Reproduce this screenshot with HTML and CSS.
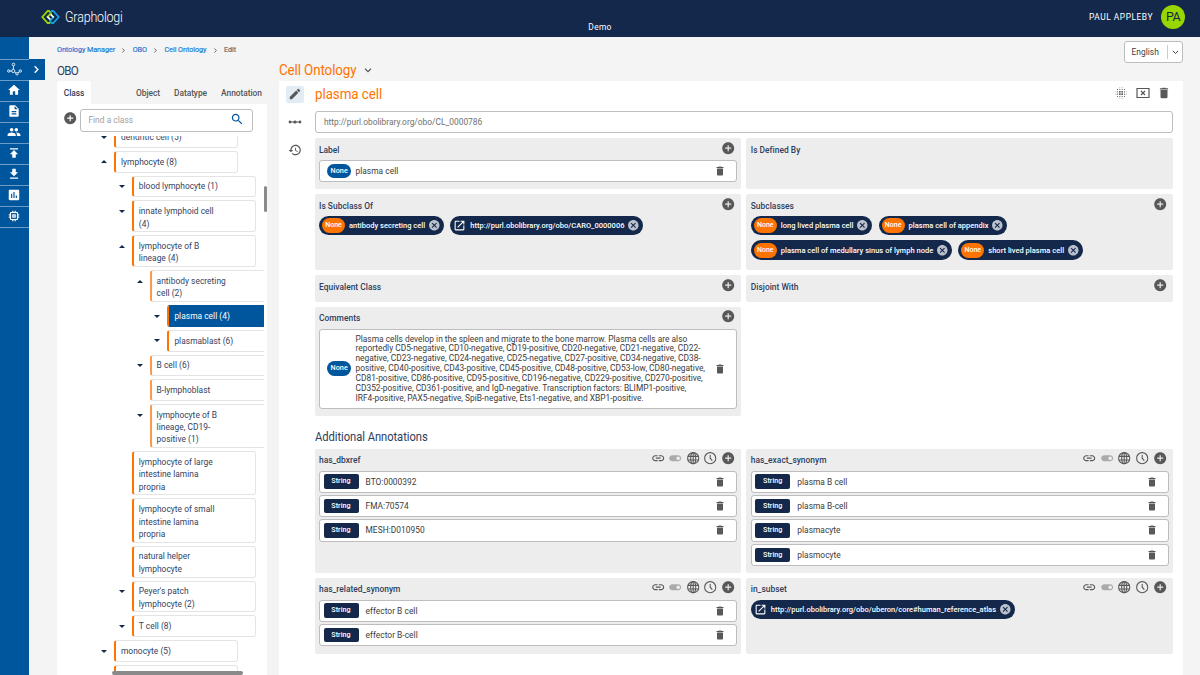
FILE: index.html
```html
<!DOCTYPE html>
<html lang="en">
<head>
    <meta charset="UTF-8">
    <meta name="viewport" content="width=device-width, initial-scale=1.0">
    <title>Graphologi</title>
    <link rel="stylesheet" href="styles.css">
</head>
<body>

    <!-- Icon set -->
    <svg class="sprite">
        <symbol id="i-add" viewBox="0 0 24 24"><path d="M12 2C6.48 2 2 6.48 2 12s4.480 10 10 10 10-4.480 10-10S17.520 2 12 2zm5 11h-4v4h-2v-4H7v-2h4V7h2v4h4v2z"/></symbol>
        <symbol id="i-trash" viewBox="0 0 24 24"><path d="M6 19c0 1.100.9 2 2 2h8c1.100 0 2-.9 2-2V7H6v12zM19 4h-3.500l-1-1h-5l-1 1H5v2h14V4z"/></symbol>
        <symbol id="i-cancel" viewBox="0 0 24 24"><path d="M12 2C6.470 2 2 6.470 2 12s4.470 10 10 10 10-4.470 10-10S17.530 2 12 2zm5 13.590L15.590 17 12 13.410 8.410 17 7 15.590 10.590 12 7 8.410 8.410 7 12 10.590 15.590 7 17 8.410 13.410 12 17 15.590z"/></symbol>
        <symbol id="i-open" viewBox="0 0 24 24"><path d="M19 19H5V5h7V3H5c-1.110 0-2 .9-2 2v14c0 1.100.89 2 2 2h14c1.100 0 2-.9 2-2v-7h-2v7zM14 3v2h3.590l-9.830 9.830 1.410 1.410L19 6.410V10h2V3h-7z"/></symbol>
        <symbol id="i-link" viewBox="0 0 24 24"><path d="M3.900 12c0-1.710 1.390-3.100 3.100-3.100h4V7H7c-2.760 0-5 2.240-5 5s2.240 5 5 5h4v-1.900H7c-1.710 0-3.100-1.390-3.100-3.100zM8 13h8v-2H8v2zm9-6h-4v1.900h4c1.710 0 3.100 1.390 3.100 3.100s-1.390 3.100-3.100 3.100h-4V17h4c2.760 0 5-2.240 5-5s-2.240-5-5-5z"/></symbol>
        <symbol id="i-toggle" viewBox="0 0 24 24"><path d="M17 7H7c-2.760 0-5 2.240-5 5s2.240 5 5 5h10c2.760 0 5-2.240 5-5s-2.240-5-5-5zm0 8c-1.660 0-3-1.340-3-3s1.340-3 3-3 3 1.340 3 3-1.340 3-3 3z"/></symbol>
        <symbol id="i-globe" viewBox="0 0 24 24"><g fill="none" stroke="currentColor" stroke-width="1.800"><circle cx="12" cy="12" r="9.300"/><ellipse cx="12" cy="12" rx="4.200" ry="9.300"/><path d="M3.200 9h17.600M3.200 15h17.600M12 2.500v19"/></g></symbol>
        <symbol id="i-clock" viewBox="0 0 24 24"><g fill="none" stroke="currentColor" stroke-width="1.800"><circle cx="12" cy="12" r="9.300"/><path d="M12 6.500V12l3.500 4"/></g></symbol>
        <symbol id="i-home" viewBox="0 0 24 24"><path d="M10 20v-6h4v6h5v-8h3L12 3 2 12h3v8z"/></symbol>
        <symbol id="i-doc" viewBox="0 0 24 24"><path d="M14 2H6c-1.100 0-2 .9-2 2v16c0 1.100.9 2 2 2h12c1.100 0 2-.9 2-2V8l-6-6zm2 16H8v-2h8v2zm0-4H8v-2h8v2zm-3-5V3.500L18.500 9H13z"/></symbol>
        <symbol id="i-people" viewBox="0 0 24 24"><path d="M16 11c1.660 0 3-1.340 3-3s-1.340-3-3-3-3 1.340-3 3 1.340 3 3 3zm-8 0c1.660 0 3-1.340 3-3S9.660 5 8 5 5 6.340 5 8s1.340 3 3 3zm0 2c-2.330 0-7 1.170-7 3.500V19h14v-2.500c0-2.330-4.670-3.500-7-3.500zm8 0c-.29 0-.62.020-.97.050 1.160.84 1.970 1.970 1.970 3.450V19h6v-2.500c0-2.330-4.670-3.500-7-3.500z"/></symbol>
        <symbol id="i-publish" viewBox="0 0 24 24"><path d="M5 4v2h14V4H5zm0 10h4v6h6v-6h4l-7-7-7 7z"/></symbol>
        <symbol id="i-download" viewBox="0 0 24 24"><path d="M19 9h-4V3H9v6H5l7 7 7-7zM5 18v2h14v-2H5z"/></symbol>
        <symbol id="i-chart" viewBox="0 0 24 24"><path d="M19 3H5c-1.100 0-2 .9-2 2v14c0 1.100.9 2 2 2h14c1.100 0 2-.9 2-2V5c0-1.100-.9-2-2-2zM9 17H7v-7h2v7zm4 0h-2V7h2v10zm4 0h-2v-4h2v4z"/></symbol>
        <symbol id="i-chip" viewBox="0 0 24 24"><path d="M15 9H9v6h6V9zm-2 4h-2v-2h2v2zm8-2V9h-2V7c0-1.100-.9-2-2-2h-2V3h-2v2h-2V3H9v2H7c-1.100 0-2 .9-2 2v2H3v2h2v2H3v2h2v2c0 1.100.9 2 2 2h2v2h2v-2h2v2h2v-2h2c1.100 0 2-.9 2-2v-2h2v-2h-2v-2h2zm-4 6H7V7h10v10z"/></symbol>
        <symbol id="i-graph" viewBox="0 0 30 26"><g fill="none" stroke="currentColor" stroke-width="1.700"><circle cx="13" cy="4" r="2.600"/><circle cx="3.500" cy="17" r="2.400"/><circle cx="12.500" cy="17" r="3.200"/><circle cx="20" cy="22.500" r="2.400"/><circle cx="26.500" cy="17" r="2.400"/><path d="M12.800 6.600v7M6 17h3.300M15.400 19l2.600 2M22 21l2.600-2.400"/></g></symbol>
        <symbol id="i-search" viewBox="0 0 24 24"><path d="M15.500 14h-.79l-.28-.27C15.410 12.590 16 11.110 16 9.500 16 5.910 13.090 3 9.500 3S3 5.910 3 9.500 5.910 16 9.500 16c1.610 0 3.090-.59 4.230-1.570l.27.28v.79l5 4.990L20.490 19l-4.990-5zm-6 0C7.010 14 5 11.990 5 9.500S7.010 5 9.500 5 14 7.010 14 9.500 11.990 14 9.500 14z"/></symbol>
        <symbol id="i-edit" viewBox="0 0 24 24"><path d="M3 17.250V21h3.750L17.810 9.940l-3.750-3.750L3 17.250zM20.710 7.040c.39-.39.39-1.020 0-1.410l-2.340-2.340c-.39-.39-1.020-.39-1.410 0l-1.830 1.830 3.750 3.750 1.830-1.830z"/></symbol>
        <symbol id="i-scale" viewBox="0 0 24 24"><path d="M23 12c0 1.400-1.100 2.500-2.500 2.500-1.100 0-2-.6-2.400-1.600h-3.200c-.5 1-1.700 1.700-2.900 1.700s-2.400-.7-2.900-1.700H5.900c-.4 1-1.300 1.600-2.400 1.600C2.100 14.500 1 13.400 1 12s1.100-2.500 2.500-2.500c1.100 0 2 .6 2.400 1.600h3.200c.5-1 1.700-1.700 2.900-1.700s2.400.7 2.900 1.700h3.200c.4-1 1.300-1.600 2.400-1.600 1.400 0 2.500 1.100 2.500 2.500z"/></symbol>
        <symbol id="i-history" viewBox="0 0 24 24"><path d="M13 3c-4.970 0-9 4.030-9 9H1l3.890 3.890.07.14L9 12H6c0-3.870 3.130-7 7-7s7 3.130 7 7-3.130 7-7 7c-1.930 0-3.680-.79-4.940-2.060l-1.420 1.420C8.270 19.990 10.510 21 13 21c4.970 0 9-4.030 9-9s-4.030-9-9-9zm-1 5v5l4.280 2.540.72-1.210-3.500-2.080V8H12z"/></symbol>
        <symbol id="i-blur" viewBox="0 0 24 24"><g fill="none" stroke="currentColor" stroke-linecap="round"><path d="M6 6h12.100M6 10h12.100M6 14h12.100M6 18h12.100" stroke-width="2" stroke-dasharray="0.010 4"/><path d="M10 10h4.100M10 14h4.100" stroke-width="3" stroke-dasharray="0.010 4"/><path d="M10 3h4.100M10 21h4.100M3 10v4.100M21 10v4.100" stroke-width="1" stroke-dasharray="0.010 4"/></g></symbol>
        <symbol id="i-close-box" viewBox="0 0 28 24"><path d="M2 3h24v18H2z" fill="none" stroke="currentColor" stroke-width="2.400"/><path d="M10 8l8 8M18 8l-8 8" stroke="currentColor" stroke-width="2.400"/></symbol>
        <symbol id="i-down" viewBox="0 0 24 24"><path d="M5 9l7 7 7-7" fill="none" stroke="currentColor" stroke-width="2.600"/></symbol>
        <symbol id="i-right" viewBox="0 0 24 24"><path d="M8 5l7 7-7 7" fill="none" stroke="currentColor" stroke-width="3"/></symbol>
    </svg>

    <!-- Top bar -->
    <header class="topbar">
        <div class="brand">
            <svg class="logo" viewBox="0 0 57 42">
                <g fill="none" stroke-width="5.500">
                    <path d="M29 8l-5-5h-4L4 21l16 18h5l4-4" stroke="#9bd600"/>
                    <path d="M28 8l5-5h4l16 18-16 18h-5l-4-4" stroke="#12a0de"/>
                    <path d="M18 22L31 9" stroke="#9bd600"/>
                    <path d="M39 20L26 33" stroke="#12a0de"/>
                    <path d="M19 20l9 9M29 13l9 9" stroke="#fff" stroke-width="5"/>
                </g>
            </svg>
            <span class="brand-name">Graphologi</span>
        </div>
        <span class="workspace">Demo</span>
        <div class="user">
            <span>PAUL APPLEBY</span>
            <span class="avatar">PA</span>
        </div>
    </header>

    <div class="shell">
        <nav class="sidebar">
            <a class="side-item wide"><svg><use href="#i-graph"/></svg></a>
            <a class="side-item"><svg><use href="#i-home"/></svg></a>
            <a class="side-item"><svg><use href="#i-doc"/></svg></a>
            <a class="side-item"><svg><use href="#i-people"/></svg></a>
            <a class="side-item"><svg><use href="#i-publish"/></svg></a>
            <a class="side-item"><svg><use href="#i-download"/></svg></a>
            <a class="side-item"><svg><use href="#i-chart"/></svg></a>
            <a class="side-item"><svg><use href="#i-chip"/></svg></a>
        </nav>
        <button class="expand"><svg><use href="#i-right"/></svg></button>

        <!-- Class browser -->
        <section class="browser">
            <div class="crumbs">
                <a>Ontology Manager</a><svg><use href="#i-right"/></svg>
                <a>OBO</a><svg><use href="#i-right"/></svg>
                <a>Cell Ontology</a><svg><use href="#i-right"/></svg>
                <span>Edit</span>
            </div>
            <h2 class="project">OBO</h2>
            <div class="tabs">
                <span class="tab active">Class</span>
                <span class="tab t-object">Object</span>
                <span class="tab t-datatype">Datatype</span>
                <span class="tab">Annotation</span>
            </div>
            <div class="browser-panel">
                <div class="search-row">
                    <svg class="add"><use href="#i-add"/></svg>
                    <div class="search"><span>Find a class</span><svg><use href="#i-search"/></svg></div>
                </div>
                <div class="tree">
                    <div class="node"><i class="down"></i><div class="leaf">dendritic cell (5)</div></div>
                    <div class="node"><i class="up"></i><div class="leaf">lymphocyte (8)</div></div>
                    <div class="branch">
                        <div class="node"><i class="down"></i><div class="leaf">blood lymphocyte (1)</div></div>
                        <div class="node"><i class="down"></i><div class="leaf">innate lymphoid cell<br>(4)</div></div>
                        <div class="node"><i class="up"></i><div class="leaf">lymphocyte of B<br>lineage (4)</div></div>
                        <div class="branch soft">
                            <div class="node"><i class="up"></i><div class="leaf">antibody secreting<br>cell (2)</div></div>
                            <div class="branch">
                                <div class="node"><i class="down"></i><div class="leaf selected">plasma cell (4)</div></div>
                                <div class="node"><i class="down"></i><div class="leaf">plasmablast (6)</div></div>
                            </div>
                            <div class="node"><i class="down"></i><div class="leaf">B cell (6)</div></div>
                            <div class="node"><i></i><div class="leaf">B-lymphoblast</div></div>
                            <div class="node"><i class="down"></i><div class="leaf">lymphocyte of B<br>lineage, CD19-<br>positive (1)</div></div>
                        </div>
                        <div class="node"><i></i><div class="leaf">lymphocyte of large<br>intestine lamina<br>propria</div></div>
                        <div class="node"><i></i><div class="leaf">lymphocyte of small<br>intestine lamina<br>propria</div></div>
                        <div class="node"><i></i><div class="leaf">natural helper<br>lymphocyte</div></div>
                        <div class="node"><i class="down"></i><div class="leaf">Peyer's patch<br>lymphocyte (2)</div></div>
                        <div class="node"><i class="down"></i><div class="leaf">T cell (8)</div></div>
                    </div>
                    <div class="node"><i class="down"></i><div class="leaf">monocyte (5)</div></div>
                    <div class="node"><i></i><div class="leaf"></div></div>
                </div>
                <div class="thumb-y"></div>
                <div class="thumb-x"></div>
            </div>
        </section>

        <!-- Class editor -->
        <main class="editor">
            <div class="editor-top">
                <div class="ontology"><h1>Cell Ontology</h1><svg><use href="#i-down"/></svg></div>
                <div class="language"><span>English</span><svg><use href="#i-down"/></svg></div>
            </div>
            <div class="editor-panel">
                <div class="tools">
                    <span class="tool on"><svg><use href="#i-edit"/></svg></span>
                    <span class="tool"><svg><use href="#i-scale"/></svg></span>
                    <span class="tool"><svg><use href="#i-history"/></svg></span>
                </div>
                <div class="content">
                    <div class="title-row">
                        <h1 class="title">plasma cell</h1>
                        <svg class="act"><use href="#i-blur"/></svg>
                        <svg class="act box"><use href="#i-close-box"/></svg>
                        <svg class="act"><use href="#i-trash"/></svg>
                    </div>
                    <div class="uri">http://purl.obolibrary.org/obo/CL_0000786</div>

                    <div class="cards">
                        <section class="card r-label">
                            <header><h3>Label</h3><svg><use href="#i-add"/></svg></header>
                            <div class="row"><span class="lang">None</span><span class="val">plasma cell</span><svg class="bin"><use href="#i-trash"/></svg></div>
                        </section>
                        <section class="card">
                            <header><h3>Is Defined By</h3></header>
                        </section>
                        <section class="card r-sub">
                            <header><h3>Is Subclass Of</h3><svg><use href="#i-add"/></svg></header>
                            <div class="chips">
                                <span class="chip"><b>None</b>antibody secreting cell<svg><use href="#i-cancel"/></svg></span>
                                <span class="chip"><svg class="open"><use href="#i-open"/></svg>http://purl.obolibrary.org/obo/CARO_0000006<svg><use href="#i-cancel"/></svg></span>
                            </div>
                        </section>
                        <section class="card">
                            <header><h3>Subclasses</h3><svg><use href="#i-add"/></svg></header>
                            <div class="chips">
                                <span class="chip"><b>None</b>long lived plasma cell<svg><use href="#i-cancel"/></svg></span>
                                <span class="chip"><b>None</b>plasma cell of appendix<svg><use href="#i-cancel"/></svg></span>
                                <span class="chip"><b>None</b>plasma cell of medullary sinus of lymph node<svg><use href="#i-cancel"/></svg></span>
                                <span class="chip"><b>None</b>short lived plasma cell<svg><use href="#i-cancel"/></svg></span>
                            </div>
                        </section>
                        <section class="card r-eq">
                            <header><h3>Equivalent Class</h3><svg><use href="#i-add"/></svg></header>
                        </section>
                        <section class="card">
                            <header><h3>Disjoint With</h3><svg><use href="#i-add"/></svg></header>
                        </section>
                        <section class="card r-com">
                            <header><h3>Comments</h3><svg><use href="#i-add"/></svg></header>
                            <div class="row tall">
                                <span class="lang">None</span>
                                <p class="val">Plasma cells develop in the spleen and migrate to the bone marrow. Plasma cells are also<br>reportedly CD5-negative, CD10-negative, CD19-positive, CD20-negative, CD21-negative, CD22-<br>negative, CD23-negative, CD24-negative, CD25-negative, CD27-positive, CD34-negative, CD38-<br>positive, CD40-positive, CD43-positive, CD45-positive, CD48-positive, CD53-low, CD80-negative,<br>CD81-positive, CD86-positive, CD95-positive, CD196-negative, CD229-positive, CD270-positive,<br>CD352-positive, CD361-positive, and IgD-negative. Transcription factors: BLIMP1-positive,<br>IRF4-positive, PAX5-negative, SpiB-negative, Ets1-negative, and XBP1-positive.</p>
                                <svg class="bin"><use href="#i-trash"/></svg>
                            </div>
                        </section>
                    </div>

                    <h2 class="section-title">Additional Annotations</h2>

                    <div class="cards">
                        <section class="card r-ann">
                            <header><h3>has_dbxref</h3><svg><use href="#i-link"/></svg><svg class="off"><use href="#i-toggle"/></svg><svg><use href="#i-globe"/></svg><svg><use href="#i-clock"/></svg><svg><use href="#i-add"/></svg></header>
                            <div class="row"><span class="type">String</span><span class="val">BTO:0000392</span><svg class="bin"><use href="#i-trash"/></svg></div>
                            <div class="row"><span class="type">String</span><span class="val">FMA:70574</span><svg class="bin"><use href="#i-trash"/></svg></div>
                            <div class="row"><span class="type">String</span><span class="val">MESH:D010950</span><svg class="bin"><use href="#i-trash"/></svg></div>
                        </section>
                        <section class="card">
                            <header><h3>has_exact_synonym</h3><svg><use href="#i-link"/></svg><svg class="off"><use href="#i-toggle"/></svg><svg><use href="#i-globe"/></svg><svg><use href="#i-clock"/></svg><svg><use href="#i-add"/></svg></header>
                            <div class="row"><span class="type">String</span><span class="val">plasma B cell</span><svg class="bin"><use href="#i-trash"/></svg></div>
                            <div class="row"><span class="type">String</span><span class="val">plasma B-cell</span><svg class="bin"><use href="#i-trash"/></svg></div>
                            <div class="row"><span class="type">String</span><span class="val">plasmacyte</span><svg class="bin"><use href="#i-trash"/></svg></div>
                            <div class="row"><span class="type">String</span><span class="val">plasmocyte</span><svg class="bin"><use href="#i-trash"/></svg></div>
                        </section>
                        <section class="card r-rel">
                            <header><h3>has_related_synonym</h3><svg><use href="#i-link"/></svg><svg class="off"><use href="#i-toggle"/></svg><svg><use href="#i-globe"/></svg><svg><use href="#i-clock"/></svg><svg><use href="#i-add"/></svg></header>
                            <div class="row"><span class="type">String</span><span class="val">effector B cell</span><svg class="bin"><use href="#i-trash"/></svg></div>
                            <div class="row"><span class="type">String</span><span class="val">effector B-cell</span><svg class="bin"><use href="#i-trash"/></svg></div>
                        </section>
                        <section class="card">
                            <header><h3>in_subset</h3><svg><use href="#i-link"/></svg><svg class="off"><use href="#i-toggle"/></svg><svg><use href="#i-globe"/></svg><svg><use href="#i-clock"/></svg><svg><use href="#i-add"/></svg></header>
                            <div class="chips">
                                <span class="chip"><svg class="open"><use href="#i-open"/></svg>http://purl.obolibrary.org/obo/uberon/core#human_reference_atlas<svg><use href="#i-cancel"/></svg></span>
                            </div>
                        </section>
                    </div>
                </div>
            </div>
        </main>
    </div>

</body>
</html>
```
FILE: styles.css
```css
:root {
    --navy: #13284b;
    --blue: #00569d;
    --orange: #ff7300;
    --grey-icon: #585858;
    --card: #ededed;
}

* {
    box-sizing: border-box;
}

body {
    margin: 0;
    height: 675px;
    overflow: hidden;
    background: #f4f4f4;
    color: #3c3c3c;
    font-family: Roboto, sans-serif;
    font-size: 8.4px;
    letter-spacing: 0.03px;
}

h1, h2, h3, p {
    margin: 0;
    font-weight: 400;
}

svg {
    display: block;
    flex: none;
    fill: currentColor;
}

.sprite {
    display: none;
}

/* Narrow display headings */
.brand-name,
.project,
.ontology h1,
.title,
.section-title {
    transform: scaleX(0.86);
    transform-origin: left center;
}

/* Top bar */
.topbar {
    display: grid;
    grid-template-columns: 1fr auto 1fr;
    height: 37px;
    padding: 0 15px;
    background: var(--navy);
    color: #fff;
}

.brand {
    display: flex;
    align-items: center;
    padding: 0 0 3px 26px;
}

.logo {
    width: 19px;
    height: 14px;
}

.brand-name {
    margin-left: 5px;
    font-size: 14.5px;
    font-weight: 300;
    letter-spacing: -0.2px;
}

.workspace {
    padding-top: 22px;
    letter-spacing: 0.3px;
    line-height: 10px;
}

.user {
    display: flex;
    align-items: center;
    justify-content: flex-end;
    gap: 8px;
    padding-bottom: 3px;
    letter-spacing: 0.55px;
}

.avatar {
    width: 24px;
    height: 24px;
    border-radius: 50%;
    background: #98d600;
    color: var(--navy);
    font-size: 12.5px;
    letter-spacing: -0.5px;
    line-height: 24px;
    text-align: center;
}

.shell {
    display: flex;
    height: 638px;
}

/* Sidebar */
.sidebar {
    width: 29px;
    padding-top: 21.500px;
    background: var(--blue);
    color: #fff;
}

.side-item {
    display: flex;
    align-items: center;
    justify-content: center;
    height: 21.050px;
    padding: 0 1px 1.500px 0;
    border-top: 1px solid #6c9cc6;
}

.side-item:last-child {
    height: 22px;
    border-bottom: 1px solid #6c9cc6;
}

.side-item svg {
    width: 14px;
    height: 14px;
}

.side-item.wide svg {
    width: 15px;
}

.expand {
    width: 16px;
    height: 21px;
    margin: 22px 0 0 0;
    padding: 0 0 0 2px;
    border: 0;
    background: var(--blue);
    color: #fff;
}

.expand svg {
    width: 11px;
    height: 11px;
}

/* Class browser */
.browser {
    display: flex;
    flex-direction: column;
    width: 210px;
    margin-left: 12px;
}

.crumbs {
    display: flex;
    align-items: center;
    height: 25px;
    color: #1976d2;
    font-size: 7.200px;
    letter-spacing: -0.04px;
    -webkit-text-stroke: 0.15px;
}

.crumbs svg {
    width: 7px;
    height: 7px;
    margin: 1px 5.300px 0;
    color: #555;
}

.crumbs span {
    color: #666;
}

.project {
    height: 19px;
    color: #2d3d5c;
    font-size: 13.500px;
    line-height: 17px;
    letter-spacing: -0.9px;
}

.tabs {
    display: flex;
    height: 23px;
    color: #555;
    font-weight: 500;
    letter-spacing: -0.04px;
    line-height: 24.500px;
}

.tab.active {
    width: 34px;
    border-radius: 3px 3px 0 0;
    background: #fff;
    color: #2d3d5c;
    text-align: center;
}

.t-object {
    margin-left: 45px;
}

.t-datatype {
    margin: 0 14px;
}

.browser-panel {
    position: relative;
    display: flex;
    flex: 1;
    flex-direction: column;
    min-height: 0;
    background: #fff;
}

.search-row {
    display: flex;
    height: 32px;
    padding: 5px 0 0 5.500px;
}

.add {
    width: 14.400px;
    height: 14.400px;
    margin-top: 1.500px;
    color: var(--grey-icon);
}

.search {
    display: flex;
    align-items: center;
    justify-content: space-between;
    width: 173px;
    height: 22.500px;
    margin-left: 3.500px;
    padding: 0 8px 0 7px;
    border: 1px solid #bdbdbd;
    border-radius: 3px;
    color: #a0a0a0;
}

.search svg {
    width: 14.400px;
    height: 14.400px;
    margin-bottom: 2px;
    color: var(--blue);
}

/* Tree */
.tree {
    display: flex;
    flex: 1;
    flex-direction: column;
    justify-content: flex-end;
    width: 207px;
    min-height: 0;
    padding-left: 44px;
    margin-bottom: -14.700px;
    overflow: hidden;
}

.branch {
    padding-left: 17.800px;
}

.node {
    display: flex;
    flex: none;
    margin-bottom: 3px;
}

.node i {
    width: 6px;
    margin-right: 7px;
}

.node i::before {
    content: "";
    display: block;
    margin-top: 9.500px;
    border: 3px solid transparent;
    border-bottom-width: 0;
}

.node i.down::before {
    border-top-color: var(--navy);
}

.node i.up::before {
    border-width: 0 3px 3px;
    border-bottom-color: var(--navy);
}

.leaf {
    flex: none;
    width: 124px;
    min-height: 21.750px;
    padding: 3.800px 5px 1.500px;
    border: 1px solid #e4e4e4;
    border-left: 2px solid var(--orange);
    border-radius: 3px;
    color: #33425f;
    line-height: 12.300px;
}

.soft > .node > .leaf {
    border-left-color: #fb9a4d;
}

.leaf.selected {
    border-color: var(--blue);
    border-left-color: var(--orange);
    background: var(--blue);
    color: #fff;
}

.thumb-y,
.thumb-x {
    position: absolute;
    border-radius: 2px;
    background: #8a8a8a;
}

.thumb-y {
    top: 82px;
    right: 0;
    width: 3.500px;
    height: 26px;
}

.thumb-x {
    bottom: 0;
    left: 55px;
    width: 131px;
    height: 4px;
}

/* Editor */
.editor {
    flex: 1;
    margin: 0 17px 0 12px;
}

.editor-top {
    display: flex;
    justify-content: space-between;
    height: 44px;
}

.ontology {
    display: flex;
    align-items: center;
    height: 24px;
    margin-top: 20.500px;
    color: var(--orange);
}

.ontology h1 {
    width: 84px;
    font-size: 15.500px;
    letter-spacing: -0.1px;
    white-space: nowrap;
}

.ontology svg {
    width: 10px;
    height: 10px;
    color: #555;
}

.language {
    display: flex;
    align-items: center;
    justify-content: space-between;
    width: 59.500px;
    height: 22px;
    margin-top: 4px;
    padding: 0 2px 0 7px;
    border: 1px solid #bdbdbd;
    border-radius: 3px;
    background: #fff;
}

.language svg {
    width: 13px;
    height: 14px;
    padding-left: 3px;
    border-left: 1px solid #ccc;
}

.editor-panel {
    display: flex;
    height: 594px;
    background: #fff;
}

.tools {
    display: flex;
    flex-direction: column;
    width: 35.500px;
    padding: 4.500px 0 0 7px;
}

.tool {
    display: flex;
    align-items: center;
    justify-content: center;
    width: 18px;
    height: 17px;
    margin-bottom: 11.200px;
    color: var(--grey-icon);
}

.tool.on {
    border-radius: 2px;
    background: #e2ecf5;
}

.tool svg {
    width: 14px;
    height: 14px;
}

.content {
    width: 858.500px;
}

.title-row {
    display: flex;
    align-items: center;
    height: 30px;
    padding: 0 2px 6px 0;
    color: var(--grey-icon);
}

.title {
    flex: 1;
    padding-top: 2px;
    color: var(--orange);
    font-size: 15.500px;
    letter-spacing: -0.05px;
}

.act {
    width: 14px;
    height: 14px;
    margin-left: 7.500px;
}

.act.box {
    width: 14px;
    height: 12px;
}

.uri {
    height: 22px;
    padding-left: 8.500px;
    border: 1px solid #bdbdbd;
    border-radius: 3px;
    color: #707070;
    letter-spacing: 0;
    line-height: 20px;
}

.cards {
    display: grid;
    grid-template-columns: 1fr 1fr;
    gap: 5px;
    margin-top: 5px;
}

.card {
    padding: 0 4.500px;
    border-radius: 2px;
    background: var(--card);
}

.r-label { height: 51px; }
.r-sub { height: 76px; }
.r-eq { height: 26.500px; }
.r-com { height: 109px; }
.r-ann { height: 124px; }
.r-rel { height: 76px; }

.card header {
    display: flex;
    align-items: center;
    gap: 3.200px;
    height: 22px;
    padding: 0 1.500px 2px 0;
    color: var(--grey-icon);
}

.card h3 {
    flex: 1;
    padding-top: 3px;
    color: #2d3d5c;
    font-size: 8.400px;
    font-weight: 500;
}

.card header svg {
    width: 14.400px;
    height: 14.400px;
}

.card header .off {
    color: #aaa;
}

/* Value rows */
.row {
    display: flex;
    align-items: center;
    height: 22.400px;
    margin-bottom: 2px;
    padding: 0 10px 0 3.500px;
    border: 1px solid #bdbdbd;
    border-radius: 3px;
    background: #fff;
}

.row.tall {
    height: 80px;
}

.row .val {
    flex: 1;
}

.row.tall .val {
    padding-top: 1px;
    letter-spacing: 0;
    line-height: 9.850px;
    white-space: nowrap;
}

.lang {
    width: 24px;
    height: 14.500px;
    margin: 0 4.300px 0 3.700px;
    border-radius: 8px;
    background: var(--blue);
    color: #fff;
    font-size: 7.200px;
    font-weight: 500;
    line-height: 14px;
    text-align: center;
}

.type {
    width: 35px;
    height: 14.500px;
    margin-right: 7px;
    border-radius: 2px;
    background: var(--navy);
    color: #fff;
    font-size: 7.200px;
    font-weight: 500;
    line-height: 13.500px;
    text-align: center;
}

.bin {
    width: 12px;
    height: 12px;
    color: var(--grey-icon);
}

/* Chips */
.chips {
    display: flex;
    flex-wrap: wrap;
    gap: 5px 6.500px;
}

.chip {
    display: flex;
    align-items: center;
    height: 19.400px;
    padding: 0 3px;
    border-radius: 10px;
    background: var(--navy);
    color: #fff;
    font-size: 7.500px;
    font-weight: 500;
    letter-spacing: 0.02px;
}

.chip b {
    width: 23px;
    height: 15px;
    margin-right: 4px;
    border-radius: 8px;
    background: var(--orange);
    font-size: 7px;
    font-weight: 500;
    line-height: 15px;
    text-align: center;
}

.chip svg {
    width: 12.600px;
    height: 12.600px;
    margin-left: 3px;
    color: #b9c0cc;
}

.chip .open {
    width: 13px;
    height: 13px;
    margin: 0 4px 0 0;
    color: #fff;
}

.section-title {
    height: 33px;
    margin-bottom: -5px;
    color: #2d3d5c;
    font-size: 13px;
    letter-spacing: -0.05px;
    line-height: 41px;
}
```
